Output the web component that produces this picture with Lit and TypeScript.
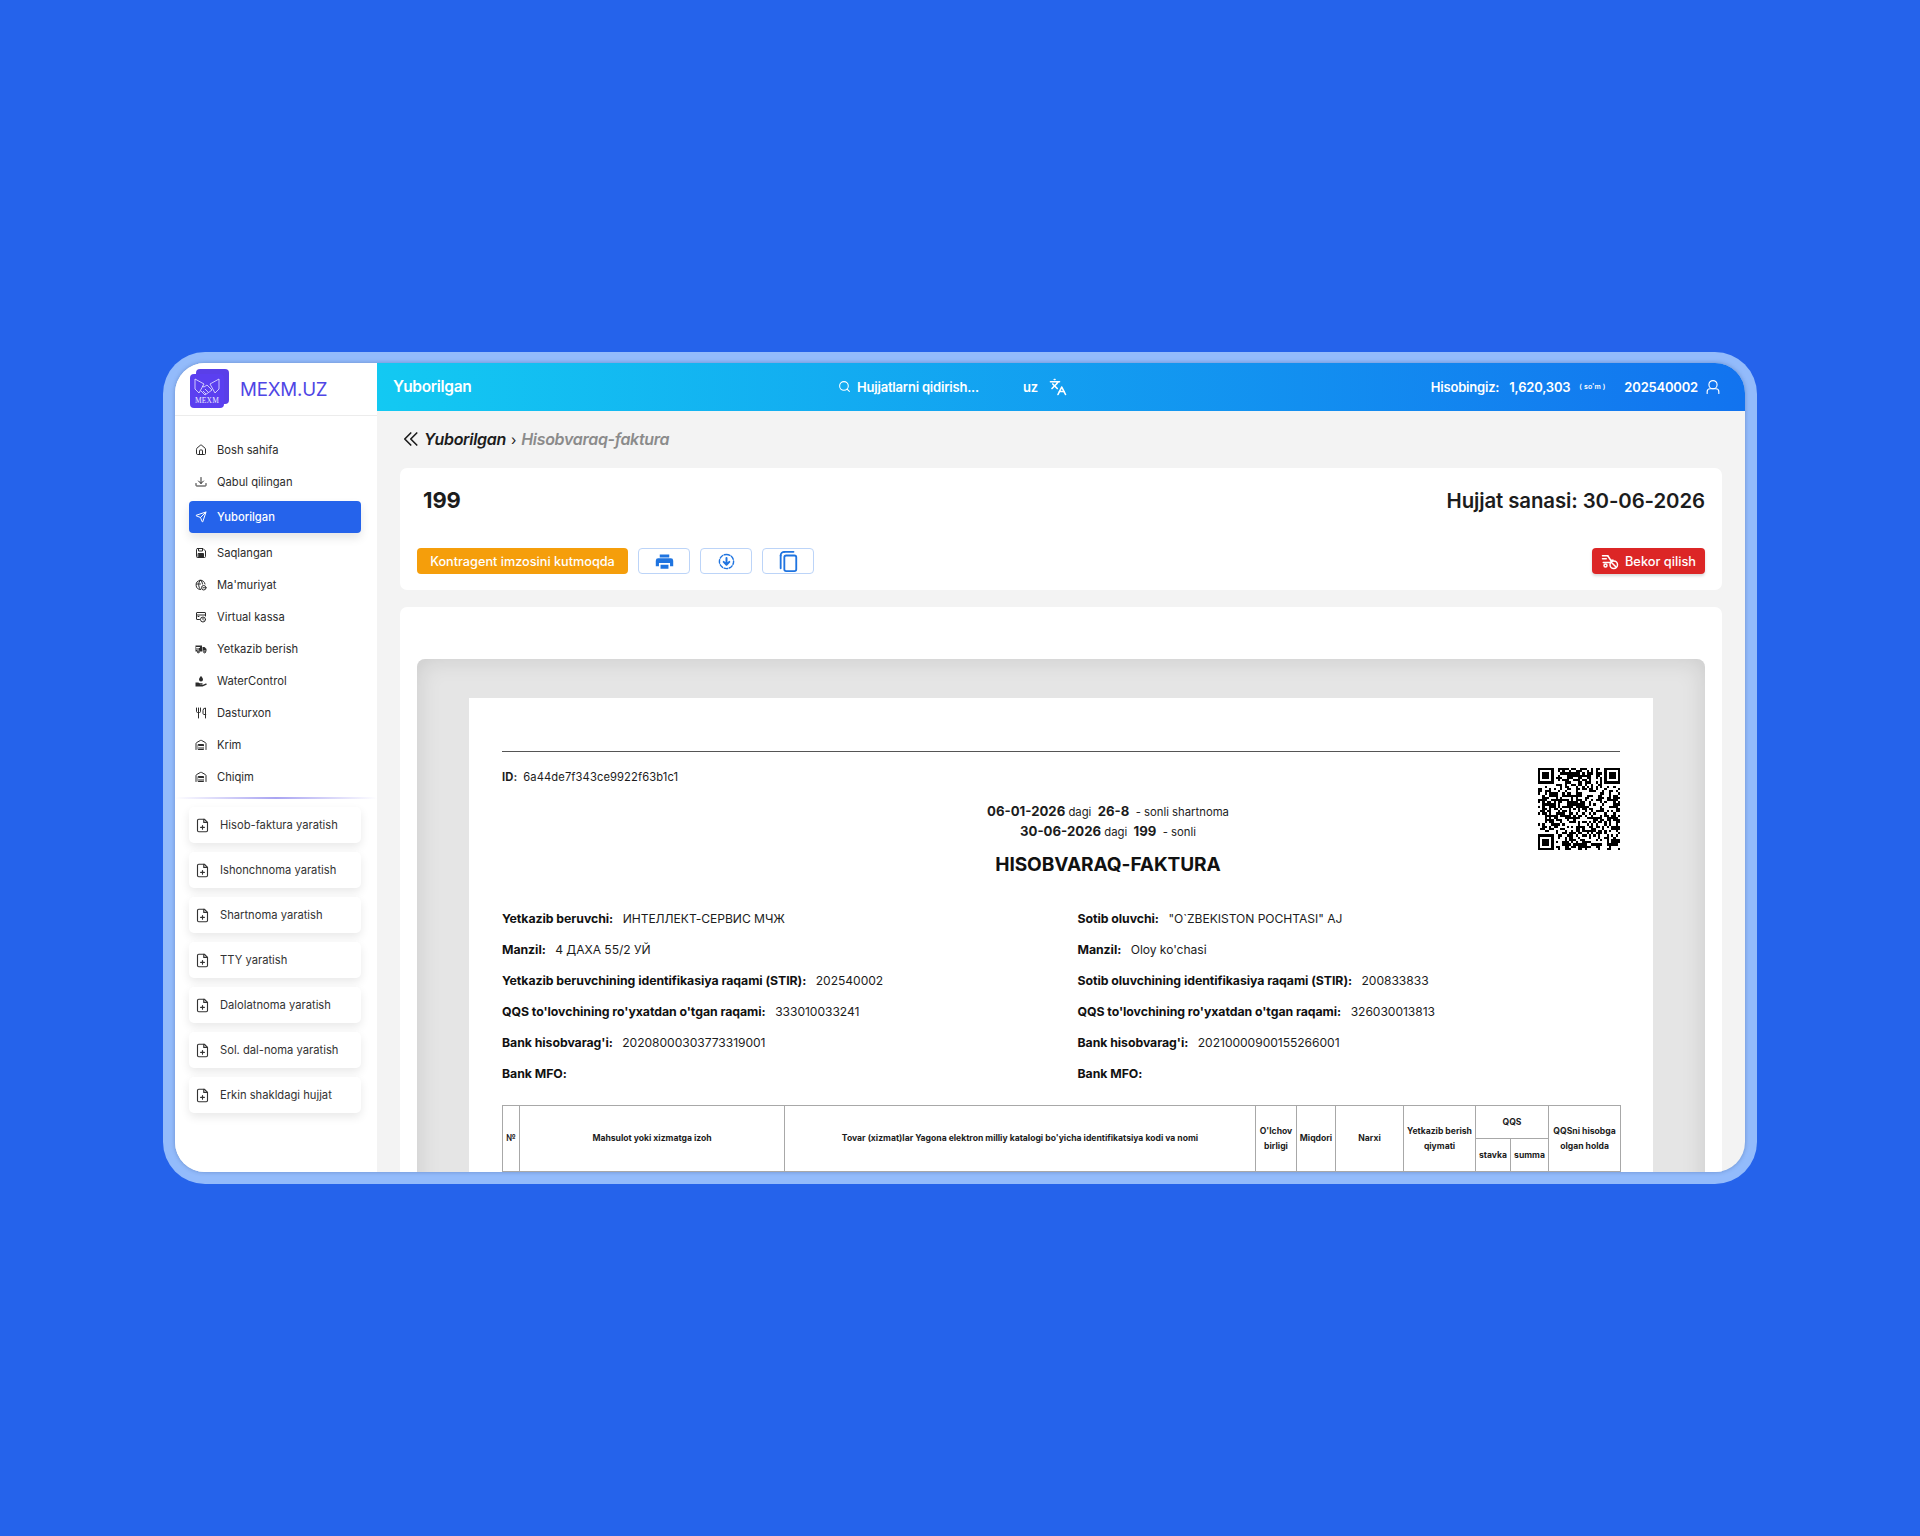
import { LitElement, html, css, svg } from "lit";
import { customElement } from "lit/decorators.js";

const icons: Record<string, any> = {
  home: svg`<path d="M15 21v-8a1 1 0 0 0-1-1h-4a1 1 0 0 0-1 1v8"/><path d="M3 10a2 2 0 0 1 .7-1.5l7-6a2 2 0 0 1 2.6 0l7 6A2 2 0 0 1 21 10v9a2 2 0 0 1-2 2H5a2 2 0 0 1-2-2z"/>`,
  inbox: svg`<path d="M12 3v12"/><path d="m7 10 5 5 5-5"/><path d="M2 15v4a1 1 0 0 0 1 1h18a1 1 0 0 0 1-1v-4"/>`,
  send: svg`<path d="M14.5 21.7a.5.5 0 0 0 .9 0l6.5-19a.5.5 0 0 0-.6-.6l-19 6.5a.5.5 0 0 0 0 .9l7.9 3.2a2 2 0 0 1 1.1 1.1z"/><path d="M21.9 2.1 10.9 13.1"/>`,
  save: svg`<path d="M5 3h11l5 5v11a2 2 0 0 1-2 2H5a2 2 0 0 1-2-2V5a2 2 0 0 1 2-2z"/><path d="M7 3v5h8V3"/><path fill="currentColor" d="M7 13h10v8H7z"/>`,
  admin: svg`<path d="M20 10a9 9 0 1 0-9 11"/><path d="M3 10h8M11 2c-5 5-5 13 0 19M11 2c2.500 2.500 3.500 5 4 8"/><circle cx="17.500" cy="17.500" r="4.500"/><path d="M16 17.500h3"/>`,
  kassa: svg`<path d="M9 17H4a1 1 0 0 1-1-1V4a1 1 0 0 1 1-1h16a1 1 0 0 1 1 1v6"/><path d="M3 8h18M8 11H6"/><circle cx="16" cy="17" r="5"/><path d="M16 14.500V17l1.500 1.500"/>`,
  truck: svg`<path fill="currentColor" stroke="none" d="M1 5h13v12H9a2.500 2.500 0 0 0-5 0H1zM15 8h4l4 4v5h-1.500a2.500 2.500 0 0 0-5 0H15z"/><circle cx="6.500" cy="18" r="1.800"/><circle cx="19" cy="18" r="1.800"/><path stroke="#fff" d="M3 9h6M3 12h4"/>`,
  water: svg`<path fill="currentColor" stroke="none" d="M12 2s-4 4-4 7a4 4 0 0 0 8 0c0-3-4-7-4-7zM1 15h5.500l3 1.500H14a1.500 1.500 0 0 1 0 3H10v.5h5l6.500-3a1.500 1.500 0 0 1 1.500 2.500L15 23H1z"/>`,
  food: svg`<path d="M3 2v7c0 1.100.9 2 2 2h4a2 2 0 0 0 2-2V2"/><path d="M7 2v20"/><path d="M21 15V2a5 5 0 0 0-5 5v6c0 1.100.9 2 2 2h3zm0 0v7"/>`,
  store: svg`<path d="M22 21V9a2 2 0 0 0-1-1.700l-8-4.500a2 2 0 0 0-2 0L3 7.300A2 2 0 0 0 2 9v12"/><path fill="currentColor" d="M7 11h10v10H7z"/><path stroke="#fff" d="M7 15h10M7 18h10"/>`,
  fileplus: svg`<path d="M15 2H6a2 2 0 0 0-2 2v16a2 2 0 0 0 2 2h12a2 2 0 0 0 2-2V7z"/><path d="M14 2v5h6"/><path d="M9 15h6M12 12v6"/>`,
  search: svg`<circle cx="11" cy="11" r="8"/><path d="m21 21-4.300-4.300"/>`,
  lang: svg`<path d="m5 8 6 6"/><path d="m4 14 6-6 2-3"/><path d="M2 5h12"/><path d="M7 2h1"/><path d="m22 22-5-10-5 10"/><path d="M14 18h6"/>`,
  user: svg`<path d="M22 23v-3a5 5 0 0 0-5-5H7a5 5 0 0 0-5 5v3"/><circle cx="12" cy="8" r="7"/>`,
  printer: svg`<path fill="currentColor" stroke="none" d="M6 3h12v4H6zM4 8h16a3 3 0 0 1 3 3v7h-4v-4H5v4H1v-7a3 3 0 0 1 3-3zM7 16h10v5H7z"/>`,
  dl: svg`<path stroke-dasharray="5 2.400" d="M12 2a10 10 0 1 1 0 20 10 10 0 0 1 0-20z"/><path stroke-width="2.800" d="M12 7v9M8 12.500l4 4 4-4"/>`,
  copy: svg`<path d="M8 2h10M4 6v14"/><path d="M4 6a4 4 0 0 1 4-4"/><rect x="8" y="6" width="13" height="17" rx="2"/>`,
  cancel: svg`<path d="M2 5h7M2 9h5"/><path d="M9 5l4 6h3M3 14h9l4-3"/><circle cx="6" cy="18" r="2"/><circle cx="17" cy="17" r="5"/><path d="m14 14 6 6"/>`,
  back: svg`<path d="M13 4l-8 8 8 8"/><path d="M21 4l-8 8 8 8"/>`,
};

function icon(name: string, cls = "") {
  return html`<svg class="ic ${cls}" viewBox="0 0 24 24" fill="none" stroke="currentColor" stroke-width="2" stroke-linecap="round" stroke-linejoin="round">${icons[name]}</svg>`;
}

const nav = [
  ["home", "Bosh sahifa"],
  ["inbox", "Qabul qilingan"],
  ["send", "Yuborilgan", true],
  ["save", "Saqlangan"],
  ["admin", "Ma'muriyat"],
  ["kassa", "Virtual kassa"],
  ["truck", "Yetkazib berish"],
  ["water", "WaterControl"],
  ["food", "Dasturxon"],
  ["store", "Krim"],
  ["store", "Chiqim"],
] as [string, string, boolean?][];

const creators = [
  "Hisob-faktura yaratish",
  "Ishonchnoma yaratish",
  "Shartnoma yaratish",
  "TTY yaratish",
  "Dalolatnoma yaratish",
  "Sol. dal-noma yaratish",
  "Erkin shakldagi hujjat",
];

const details = [
  ["Yetkazib beruvchi:", "ИНТЕЛЛЕКТ-СЕРВИС МЧЖ", "Sotib oluvchi:", "\"O`ZBEKISTON POCHTASI\" AJ"],
  ["Manzil:", "4 ДАХА 55/2 УЙ", "Manzil:", "Oloy ko'chasi"],
  ["Yetkazib beruvchining identifikasiya raqami (STIR):", "202540002", "Sotib oluvchining identifikasiya raqami (STIR):", "200833833"],
  ["QQS to'lovchining ro'yxatdan o'tgan raqami:", "333010033241", "QQS to'lovchining ro'yxatdan o'tgan raqami:", "326030013813"],
  ["Bank hisobvarag'i:", "20208000303773319001", "Bank hisobvarag'i:", "20210000900155266001"],
  ["Bank MFO:", "", "Bank MFO:", ""],
];

function qrPath() {
  const n = 37;
  let seed = 20260630;
  const rnd = () => {
    seed = (seed * 1664525 + 1013904223) >>> 0;
    return seed / 4294967296;
  };
  let d = "";
  const finder = (x: number, y: number) => {
    d += `M${x} ${y}h7v7h-7zM${x + 1} ${y + 1}v5h5v-5zM${x + 2} ${y + 2}h3v3h-3z`;
  };
  finder(0, 0);
  finder(n - 7, 0);
  finder(0, n - 7);
  for (let y = 0; y < n; y++) {
    for (let x = 0; x < n; x++) {
      const inFinder = (x < 8 && y < 8) || (x >= n - 8 && y < 8) || (x < 8 && y >= n - 8);
      if (!inFinder && rnd() > 0.5) d += `M${x} ${y}h1v1h-1z`;
    }
  }
  return d;
}
const QR = qrPath();

@customElement("app-root")
export class AppRoot extends LitElement {
  static styles = css`
    :host {
      display: flex;
      align-items: center;
      justify-content: center;
      min-height: 1536px;
      background: #2563eb;
      font-family: Inter, "Liberation Sans", sans-serif;
      color: #1c1c1c;
    }
    * { box-sizing: border-box; }
    .ic { width: 14px; height: 14px; flex: none; display: block; }
    .frame {
      width: 1594px;
      height: 832px;
      padding: 11px 12px 12px;
      background: #93bbfb;
      border-radius: 42px;
    }
    .window {
      height: 809px;
      border-radius: 30px;
      overflow: hidden;
      display: grid;
      grid-template-columns: 202px 1fr;
      background: #f3f3f3;
      box-shadow: 0 0 4px rgba(30, 60, 120, 0.35);
    }
    .side { background: #fff; display: flex; flex-direction: column; overflow: hidden; }
    .brand {
      height: 53px;
      flex: none;
      border-bottom: 1px solid #ececec;
      display: flex;
      align-items: center;
      gap: 11px;
      padding: 0 0 2px 15px;
    }
    .logo { width: 39px; height: 39px; position: relative; flex: none; }
    .logo .back { width: 33px; height: 35px; top: 0; right: 0; position: absolute; background: #5a3fe8; border-radius: 4px; }
    .logo .front {
      position: absolute; left: 0; bottom: 0; width: 34px; height: 34px; border-radius: 4px;
      background: #5b3ff0; color: #ecebff; display: flex; flex-direction: column; align-items: center;
    }
    .logo svg { width: 28px; height: 20px; margin-top: 3px; }
    .logo span { font: 7.500px/8px "Liberation Serif", serif; letter-spacing: 0.2px; }
    .name { font-size: 18.700px; color: #4f46e5; letter-spacing: -0.2px; margin-top: 3px; }
    .nav { padding: 18px 16px 0 14px; display: flex; flex-direction: column; }
    .item {
      height: 32px;
      display: flex;
      align-items: center;
      gap: 10px;
      padding-left: 6px;
      font-size: 11.200px;
      color: #2c2c2c;
      border-radius: 4px;
    }
    .item .ic { width: 12px; height: 12px; stroke-width: 2; }
    .item.active {
      background: #2563eb;
      color: #fff;
      font-weight: 500;
      margin: 3px 0 4px;
      box-shadow: 0 5px 10px rgba(0, 0, 0, 0.1);
    }
    .rule {
      height: 2px;
      margin-top: 4px;
      flex: none;
      background: linear-gradient(90deg, #fff, #a9a4f2 50%, #fff);
    }
    .creators { padding: 8px 16px 0 14px; display: flex; flex-direction: column; gap: 9px; }
    .create {
      height: 36px;
      display: flex;
      align-items: center;
      gap: 10px;
      padding-left: 6px;
      font-size: 11.200px;
      color: #333;
      background: #fff;
      border-radius: 5px;
      box-shadow: 0 4px 10px rgba(0, 0, 0, 0.09);
    }
    .create .ic { width: 15px; height: 15px; stroke-width: 1.800; }
    .main { display: flex; flex-direction: column; min-width: 0; overflow: hidden; }
    .top {
      height: 48px;
      flex: none;
      background: linear-gradient(90deg, #13c9f2, #1273ef);
      color: #fff;
      display: flex;
      align-items: center;
      padding: 0 25px 1px 16px;
      font-size: 13px;
      font-weight: 600;
      letter-spacing: -0.2px;
    }
    .top h1 { margin: 0; width: 445px; font-size: 15.500px; font-weight: 600; letter-spacing: -0.3px; }
    .find { display: flex; align-items: center; gap: 6px; width: 185px; }
    .find .ic { width: 13px; height: 13px; }
    .lang { display: flex; align-items: center; gap: 11px; }
    .lang .ic { width: 18px; height: 18px; stroke-width: 2.200; }
    .acct { margin-left: auto; display: flex; align-items: center; }
    .acct b { font-weight: 600; margin-left: 10px; }
    .acct small { font-size: 7px; margin-left: 9px; width: 45px; letter-spacing: 0.1px; }
    .acct .ic { width: 14px; height: 14px; margin-left: 8px; }
    .content { padding: 16px 23px 0 23px; flex: 1; min-height: 0; overflow: hidden; }
    .crumb {
      height: 24px;
      display: flex;
      align-items: center;
      font-size: 16px;
      font-style: italic;
      font-weight: 600;
      letter-spacing: -0.3px;
      gap: 5px;
      padding-left: 1px;
    }
    .crumb .ic { width: 18px; height: 18px; stroke-width: 2.200; }
    .crumb i { font-style: normal; font-weight: 400; font-size: 14px; }
    .crumb em { color: #8b8b8b; }
    .card { background: #fff; border-radius: 7px; }
    .head-card { margin-top: 17px; padding: 16px 17px; height: 122px; }
    .title-row {
      height: 32px;
      display: flex;
      justify-content: space-between;
      align-items: center;
      font-size: 20.400px;
      font-weight: 600;
      letter-spacing: -0.1px;
      padding-left: 6px;
    }
    .title-row .no { font-size: 22px; font-weight: 700; }
    .actions { margin-top: 32px; display: flex; align-items: center; gap: 10px; }
    .badge {
      height: 26px;
      width: 211px;
      background: #f59e0b;
      color: #fff;
      border-radius: 4px;
      font-size: 12.700px;
      font-weight: 500;
      display: flex;
      align-items: center;
      justify-content: center;
    }
    .tool {
      height: 26px;
      width: 52px;
      border: 1px solid #bcd4f8;
      border-radius: 4px;
      background: #fff;
      color: #1f74e0;
      display: flex;
      align-items: center;
      justify-content: center;
    }
    .tool .ic { width: 17px; height: 17px; }
    .tool .big { width: 19px; height: 19px; }
    .tool .xl { width: 22px; height: 22px; }
    .cancel {
      margin-left: auto;
      height: 26px;
      width: 113px;
      background: #dc2626;
      color: #fff;
      border-radius: 4px;
      font-size: 12.800px;
      font-weight: 500;
      display: flex;
      align-items: center;
      justify-content: center;
      gap: 6px;
      box-shadow: 0 2px 3px rgba(0, 0, 0, 0.15);
    }
    .cancel .ic { width: 18px; height: 18px; }
    .doc-card { margin-top: 17px; padding: 52px 17px 0; height: 700px; }
    .viewer {
      height: 700px;
      padding: 39px 52px 0;
      background: #e5e5e5;
      border-radius: 8px 8px 0 0;
      box-shadow: inset 0 0 24px rgba(0, 0, 0, 0.12);
    }
    .paper { background: #fff; height: 700px; padding: 53px 33px 0; font-size: 11.200px; }
    .line { height: 1px; background: #555; }
    .doc-head {
      margin-top: 16px;
      height: 108px;
      display: grid;
      grid-template-columns: 176px 1fr 82px;
    }
    .id { padding-top: 2px; white-space: nowrap; line-height: 14px; letter-spacing: 0.1px; }
    .id b { font-weight: 700; margin-right: 6px; }
    .contract { padding-top: 34px; text-align: center; line-height: 18.500px; font-size: 11.300px; }
    .contract b { font-size: 13.200px; font-weight: 700; }
    .contract h2 { margin: 10px 0 0; font-size: 19.100px; line-height: 26px; font-weight: 700; color: #111; letter-spacing: -0.1px; }
    .qr { width: 82px; height: 82px; display: block; }
    .rows { margin-top: 27px; display: grid; grid-template-columns: 575.500px 1fr; }
    .row { height: 31px; display: flex; align-items: center; gap: 9.500px; font-size: 12.100px; white-space: nowrap; letter-spacing: -0.05px; }
    .row b { font-weight: 700; font-size: 12.300px; color: #111; }
    table {
      margin-top: 16px;
      width: 1118px;
      table-layout: fixed;
      border-collapse: collapse;
      font-size: 8.600px;
      font-weight: 700;
      text-align: center;
      line-height: 15px;
    }
    th { border: 1px solid #a8a8a8; font-weight: 700; padding: 0; height: 33px; }
  `;

  render() {
    return html`
      <div class="frame">
        <div class="window">
          <aside class="side">
            <div class="brand">
              <div class="logo">
                <div class="back"></div>
                <div class="front">
                  <svg viewBox="0 0 28 20" fill="none" stroke="currentColor" stroke-width="0.8">
                    <path d="M2 2l9 5-5 9-4-4zM26 2l-9 5 5 9 4-4z" />
                    <path d="M8 14l4 4 7-5-5-5-3 2-2-1M12 12l3 3M10 14l3 3" />
                  </svg>
                  <span>MEXM</span>
                </div>
              </div>
              <span class="name">MEXM.UZ</span>
            </div>
            <nav class="nav">
              ${nav.map(
                ([ic, label, active]) =>
                  html`<div class="item ${active ? "active" : ""}">${icon(ic)}<span>${label}</span></div>`
              )}
            </nav>
            <div class="rule"></div>
            <div class="creators">
              ${creators.map((c) => html`<div class="create">${icon("fileplus")}<span>${c}</span></div>`)}
            </div>
          </aside>
          <section class="main">
            <header class="top">
              <h1>Yuborilgan</h1>
              <div class="find">${icon("search")}<span>Hujjatlarni qidirish...</span></div>
              <div class="lang"><span>uz</span>${icon("lang")}</div>
              <div class="acct">
                <span>Hisobingiz:</span><b>1,620,303</b><small>( so'm )</small>
                <span>202540002</span>${icon("user")}
              </div>
            </header>
            <div class="content">
              <div class="crumb">${icon("back")}<span>Yuborilgan</span><i>›</i><em>Hisobvaraq-faktura</em></div>
              <div class="card head-card">
                <div class="title-row"><span class="no">199</span><span>Hujjat sanasi: 30-06-2026</span></div>
                <div class="actions">
                  <div class="badge">Kontragent imzosini kutmoqda</div>
                  <div class="tool">${icon("printer", "big")}</div>
                  <div class="tool">${icon("dl")}</div>
                  <div class="tool">${icon("copy", "xl")}</div>
                  <div class="cancel">${icon("cancel")}<span>Bekor qilish</span></div>
                </div>
              </div>
              <div class="card doc-card">
                <div class="viewer">
                  <div class="paper">
                    <div class="line"></div>
                    <div class="doc-head">
                      <div class="id"><b>ID:</b>6a44de7f343ce9922f63b1c1</div>
                      <div class="contract">
                        <div><b>06-01-2026</b> dagi &nbsp;<b>26-8</b>&nbsp; - sonli shartnoma</div>
                        <div><b>30-06-2026</b> dagi &nbsp;<b>199</b>&nbsp; - sonli</div>
                        <h2>HISOBVARAQ-FAKTURA</h2>
                      </div>
                      <svg class="qr" viewBox="0 0 37 37" shape-rendering="crispEdges"><path fill="#000" fill-rule="evenodd" d=${QR} /></svg>
                    </div>
                    <div class="rows">
                      ${details.map(
                        (r) => html`
                          <div class="row"><b>${r[0]}</b><span>${r[1]}</span></div>
                          <div class="row"><b>${r[2]}</b><span>${r[3]}</span></div>
                        `
                      )}
                    </div>
                    <table>
                      <colgroup>
                        ${[17, 265, 471, 41, 39, 68, 72, 35, 38, 72].map((w) => html`<col style="width:${w}px" />`)}
                      </colgroup>
                      <tr>
                        <th rowspan="2">№</th>
                        <th rowspan="2">Mahsulot yoki xizmatga izoh</th>
                        <th rowspan="2">Tovar (xizmat)lar Yagona elektron milliy katalogi bo'yicha identifikatsiya kodi va nomi</th>
                        <th rowspan="2">O'lchov birligi</th>
                        <th rowspan="2">Miqdori</th>
                        <th rowspan="2">Narxi</th>
                        <th rowspan="2">Yetkazib berish qiymati</th>
                        <th colspan="2">QQS</th>
                        <th rowspan="2">QQSni hisobga olgan holda</th>
                      </tr>
                      <tr><th>stavka</th><th>summa</th></tr>
                    </table>
                  </div>
                </div>
              </div>
            </div>
          </section>
        </div>
      </div>
    `;
  }
}
